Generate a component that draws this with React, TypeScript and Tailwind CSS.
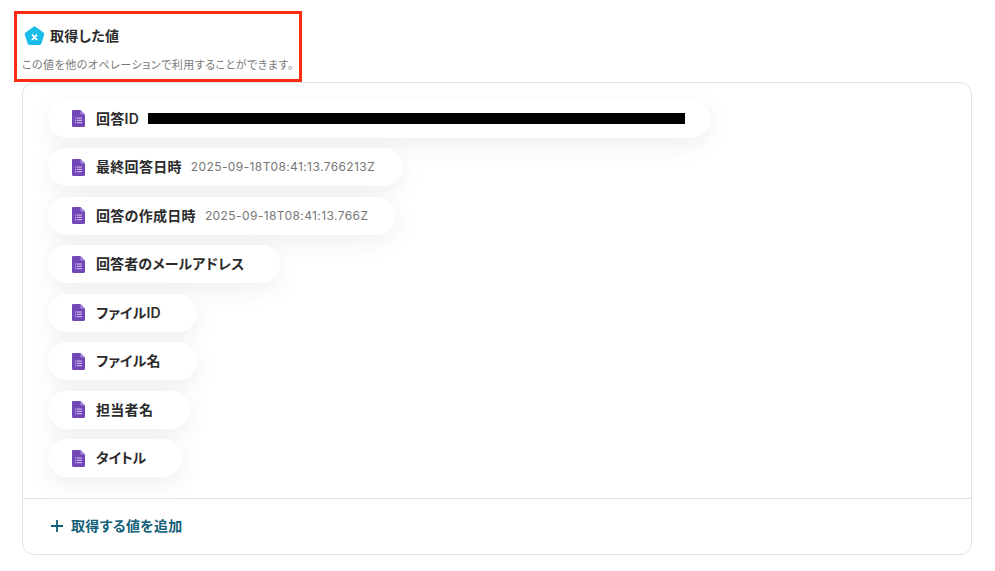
import React from 'react';

const FONT = '"Inter", "Noto Sans CJK JP", sans-serif';

const rows = [
  { label: '回答ID', redacted: true, pad: 'pr-[25px]', track: 'tracking-[0.3px]' },
  { label: '最終回答日時', value: '2025-09-18T08:41:13.766213Z', pad: 'pr-[28px]', track: 'tracking-[0.3px]' },
  { label: '回答の作成日時', value: '2025-09-18T08:41:13.766Z', pad: 'pr-[28px]', track: 'tracking-[0.3px]' },
  { label: '回答者のメールアドレス', pad: 'pr-[36px]', track: 'tracking-[0.12px]' },
  { label: 'ファイルID', pad: 'pr-[36px]', track: 'tracking-[0.15px]' },
  { label: 'ファイル名', pad: 'pr-[36px]', track: 'tracking-[0.15px]' },
  { label: '担当者名', pad: 'pr-[37px]', track: 'tracking-[0.3px]' },
  { label: 'タイトル', pad: 'pr-[36px]', track: 'tracking-[-0.2px]' },
];

const FormIcon = () => (
  <svg width="13" height="17" viewBox="0 0 13 17" className="shrink-0">
    <path d="M1.2 0H8.5L13 4.5V15.8C13 16.5 12.5 17 11.8 17H1.2C0.5 17 0 16.5 0 15.8V1.2C0 0.5 0.5 0 1.2 0Z" fill="#7248b9" />
    <path d="M8.5 0L13 4.5H9.5C8.9 4.5 8.5 4.1 8.5 3.5V0Z" fill="#a58ad6" />
    <g fill="#cdbcea">
      <rect x="3" y="7.5" width="1.2" height="1.1" />
      <rect x="5" y="7.5" width="5" height="1.1" />
      <rect x="3" y="9.8" width="1.2" height="1.1" />
      <rect x="5" y="9.8" width="5" height="1.1" />
      <rect x="3" y="12.1" width="1.2" height="1.1" />
      <rect x="5" y="12.1" width="5" height="1.1" />
    </g>
  </svg>
);

const PentagonIcon = () => (
  <svg width="21" height="20" viewBox="0 0 21 20" className="shrink-0">
    <path
      d="M9.2 0.9C10 0.3 11 0.3 11.8 0.9L19.4 6.4C20.2 7 20.5 7.9 20.2 8.8L17.4 17.6C17.1 18.5 16.3 19.1 15.3 19.1H5.7C4.7 19.1 3.9 18.5 3.6 17.6L0.8 8.8C0.5 7.9 0.8 7 1.6 6.4L9.2 0.9Z"
      fill="#19bdea"
    />
    <path d="M8 8.6L13 13.8M13 8.6L8 13.8" stroke="#fff" strokeWidth="1.7" />
  </svg>
);

export default function App() {
  return (
    <div className="w-[995px] h-[571px] bg-white overflow-hidden pt-[11px] [font-feature-settings:'palt']" style={{ fontFamily: FONT }}>
      <div className="ml-[14px] w-[288px] h-[71px] border-[3px] border-[#fb2c12] pl-[5px] flex flex-col">
        <div className="flex items-center gap-[6px] mt-[11px] ml-[2px] h-[22px]">
          <PentagonIcon />
          <span className="text-[14px] font-semibold tracking-[0.3px] text-[#2b2b2b] leading-none -ml-[1px]">取得した値</span>
        </div>
        <p className="mt-[11px] text-[11px] leading-[14px] tracking-[0.5px] text-[#7a7a7a] whitespace-nowrap">
          この値を他のオペレーションで利用することができます。
        </p>
      </div>

      <div className="ml-[22px] w-[950px] h-[473px] border border-[#e2e2e2] rounded-[12px] flex flex-col">
        <div className="flex-1 pt-[16.5px] pl-[25px] flex flex-col items-start gap-[10.5px]">
          {rows.map((row) => (
            <div
              key={row.label}
              className={`h-[38px] rounded-full bg-white flex items-center pl-[24px] ${row.pad} shadow-[0_6px_24px_rgba(0,0,0,0.07)]`}
            >
              <FormIcon />
              <span className={`ml-[11px] mb-[1px] text-[14px] font-semibold ${row.track} text-[#2b2b2b] whitespace-nowrap`}>{row.label}</span>
              {row.redacted && <span className="ml-[9px] w-[537px] h-[11px] bg-black" />}
              {row.value && (
                <span className="ml-[9px] text-[12px] tracking-[0.4px] text-[#777777] whitespace-nowrap">{row.value}</span>
              )}
            </div>
          ))}
        </div>
        <div className="h-[56px] border-t border-[#e2e2e2] flex items-center pl-[27px] gap-[7px] pb-[2px]">
          <svg width="14" height="14" viewBox="0 0 14 14">
            <path d="M7 1V13M1 7H13" stroke="#125f78" strokeWidth="1.8" />
          </svg>
          <span className="text-[14px] font-semibold tracking-[0.35px] text-[#125f78]">取得する値を追加</span>
        </div>
      </div>
    </div>
  );
}
